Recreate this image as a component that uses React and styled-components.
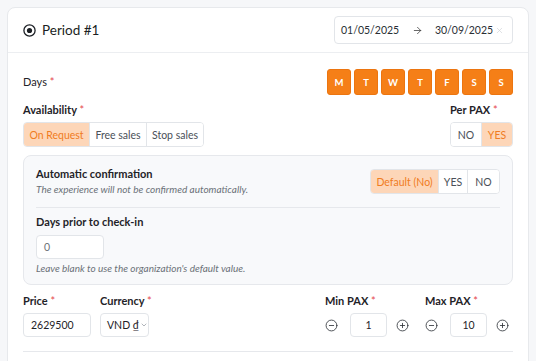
import React from "react";
import styled, { createGlobalStyle } from "styled-components";
import { ArrowRight, X, ChevronDown, CircleMinus, CirclePlus } from "lucide-react";

const GlobalStyle = createGlobalStyle`
  html, body {
    margin: 0;
    padding: 0;
    background: #f6f7f9;
    font-family: Lato, "Noto Sans", sans-serif;
    color: #1f2328;
  }
  #root {
    height: 361px;
    overflow: hidden;
    padding: 7px 7px 0 7px;
    box-sizing: border-box;
  }
  * {
    box-sizing: border-box;
  }
`;

const ORANGE = "#f57f17";
const PEACH = "#fdd6b8";
const PEACH_TEXT = "#f07c22";
const BORDER = "#e2e5e9";

const Card = styled.div`
  width: 522px;
  background: #fff;
  border: 1px solid #e7e9ec;
  border-radius: 8px;
`;

const Header = styled.div`
  height: 45px;
  padding: 0 15px;
  display: flex;
  align-items: center;
  justify-content: space-between;
  border-bottom: 1px solid #eceef1;
`;

const Title = styled.div`
  display: flex;
  align-items: center;
  gap: 6px;
  font-size: 13.5px;
  font-weight: 400;
  color: #1b1f24;
`;

const DateRange = styled.div`
  width: 179px;
  height: 28px;
  border: 1px solid ${BORDER};
  border-radius: 4px;
  display: flex;
  align-items: center;
  padding: 0 8px 0 6px;
  font-size: 10.5px;
  color: #2a2f35;

  .from {
    width: 60px;
  }
  .arrow {
    width: 32px;
    display: flex;
    justify-content: center;
    color: #333;
  }
  .to {
    flex: 1;
    text-align: center;
  }
`;

const Body = styled.div`
  padding: 16px 15px 24px 15px;
`;

const Row = styled.div`
  display: flex;
  justify-content: space-between;
  align-items: ${(p) => p.$align || "center"};
  margin-top: ${(p) => p.$mt || 0}px;
`;

const Label = styled.div`
  font-size: 11px;
  font-weight: ${(p) => (p.$bold ? 700 : 400)};
  color: #1f2328;
  line-height: 14px;
  margin-bottom: ${(p) => p.$mb || 0}px;

  span {
    color: #e5484d;
    font-weight: 400;
  }
`;

const DayList = styled.div`
  display: flex;
  gap: 3px;
`;

const Day = styled.div`
  width: 24px;
  height: 26px;
  border-radius: 3px;
  background: ${ORANGE};
  border: 1px solid #ec7510;
  color: #fff;
  font-size: 9.5px;
  font-weight: 700;
  display: flex;
  align-items: center;
  justify-content: center;
`;

const Segmented = styled.div`
  display: flex;
  height: 25px;
  border: 1px solid ${BORDER};
  border-radius: 4px;
  overflow: hidden;
  background: #fff;
`;

const Seg = styled.div`
  width: ${(p) => p.$w}px;
  display: flex;
  align-items: center;
  justify-content: center;
  white-space: nowrap;
  font-size: 10.5px;
  color: ${(p) => (p.$active ? PEACH_TEXT : "#4a5058")};
  background: ${(p) => (p.$active ? PEACH : "#fff")};
  border-left: 1px solid ${BORDER};
  &:first-child {
    border-left: none;
  }
`;

const Col = styled.div`
  display: flex;
  flex-direction: column;
  align-items: flex-start;
`;

const GrayBox = styled.div`
  margin-top: 8px;
  background: #f8f9fb;
  border: 1px solid #e6e8ec;
  border-radius: 8px;
  padding: 11px 12px 9px 12px;
`;

const Hint = styled.div`
  font-size: 10px;
  font-style: italic;
  color: #6b7178;
  line-height: 13px;
  margin-top: ${(p) => p.$mt || 0}px;
`;

const Divider = styled.div`
  height: 1px;
  background: #e6e8ec;
  margin: 11px 0 7px 0;
`;

const Input = styled.div`
  width: ${(p) => p.$w}px;
  height: 24px;
  border: 1px solid ${BORDER};
  border-radius: 4px;
  background: #fff;
  display: flex;
  align-items: center;
  justify-content: ${(p) => (p.$center ? "center" : "flex-start")};
  padding: 0 ${(p) => (p.$center ? 0 : 7)}px;
  font-size: 10.5px;
  white-space: nowrap;
  color: ${(p) => (p.$muted ? "#6b7178" : "#1f2328")};
`;

const Select = styled(Input)`
  padding: 0 3px 0 6px;
  gap: 1px;
  svg {
    flex-shrink: 0;
  }
`;

const FieldGroup = styled.div`
  display: flex;
  gap: ${(p) => p.$gap}px;
`;

const Stepper = styled.div`
  display: flex;
  align-items: center;

  svg {
    color: #2a2f35;
  }
  .minus {
    margin-right: 12px;
  }
  .plus {
    margin-left: 9px;
  }
`;

const PriceRow = styled.div`
  display: flex;
  justify-content: space-between;
  margin-top: 9px;
  padding-right: 4px;
`;

const Bottom = styled.div`
  height: 1px;
  background: #e6e8ec;
  margin-top: 14px;
`;

const days = ["M", "T", "W", "T", "F", "S", "S"];

function RadioIcon() {
  return (
    <svg width="13" height="13" viewBox="0 0 13 13">
      <circle cx="6.5" cy="6.5" r="5.6" fill="none" stroke="#1b1f24" strokeWidth="1.3" />
      <circle cx="6.5" cy="6.5" r="2.6" fill="#1b1f24" />
    </svg>
  );
}

function Pax({ label, value }) {
  return (
    <Col>
      <Label $bold $mb={5}>
        {label} <span>*</span>
      </Label>
      <Stepper>
        <CircleMinus className="minus" size={13} strokeWidth={1.5} />
        <Input $w={37} $center>
          {value}
        </Input>
        <CirclePlus className="plus" size={13} strokeWidth={1.5} />
      </Stepper>
    </Col>
  );
}

export default function App() {
  return (
    <>
      <GlobalStyle />
      <Card>
        <Header>
          <Title>
            <RadioIcon />
            Period #1
          </Title>
          <DateRange>
            <div className="from">01/05/2025</div>
            <div className="arrow">
              <ArrowRight size={11} strokeWidth={1.6} />
            </div>
            <div className="to">30/09/2025</div>
            <X size={9} color="#c8ccd1" strokeWidth={1.5} />
          </DateRange>
        </Header>
        <Body>
          <Row>
            <Label>
              Days <span>*</span>
            </Label>
            <DayList>
              {days.map((d, i) => (
                <Day key={i}>{d}</Day>
              ))}
            </DayList>
          </Row>
          <Row $align="flex-end" $mt={8}>
            <Col>
              <Label $bold $mb={5}>
                Availability <span>*</span>
              </Label>
              <Segmented>
                <Seg $active $w={65}>On Request</Seg>
                <Seg $w={57}>Free sales</Seg>
                <Seg $w={57}>Stop sales</Seg>
              </Segmented>
            </Col>
            <Col>
              <Label $bold $mb={5}>
                Per PAX <span>*</span>
              </Label>
              <Segmented>
                <Seg $w={30}>NO</Seg>
                <Seg $active $w={31}>YES</Seg>
              </Segmented>
            </Col>
          </Row>
          <GrayBox>
            <Row>
              <div>
                <Label $bold>Automatic confirmation</Label>
                <Hint $mt={2}>The experience will not be confirmed automatically.</Hint>
              </div>
              <Segmented>
                <Seg $active $w={67}>Default (No)</Seg>
                <Seg $w={29}>YES</Seg>
                <Seg $w={32}>NO</Seg>
              </Segmented>
            </Row>
            <Divider />
            <Label $bold $mb={6}>Days prior to check-in</Label>
            <Input $w={68} $muted>0</Input>
            <Hint $mt={3}>Leave blank to use the organization's default value.</Hint>
          </GrayBox>
          <PriceRow>
            <FieldGroup $gap={9}>
              <Col>
                <Label $bold $mb={5}>
                  Price <span>*</span>
                </Label>
                <Input $w={68}>2629500</Input>
              </Col>
              <Col>
                <Label $bold $mb={5}>
                  Currency <span>*</span>
                </Label>
                <Select $w={49}>
                  VND ₫
                  <ChevronDown size={8} color="#8a9098" />
                </Select>
              </Col>
            </FieldGroup>
            <FieldGroup $gap={16}>
              <Pax label="Min PAX" value="1" />
              <Pax label="Max PAX" value="10" />
            </FieldGroup>
          </PriceRow>
          <Bottom />
        </Body>
      </Card>
    </>
  );
}
